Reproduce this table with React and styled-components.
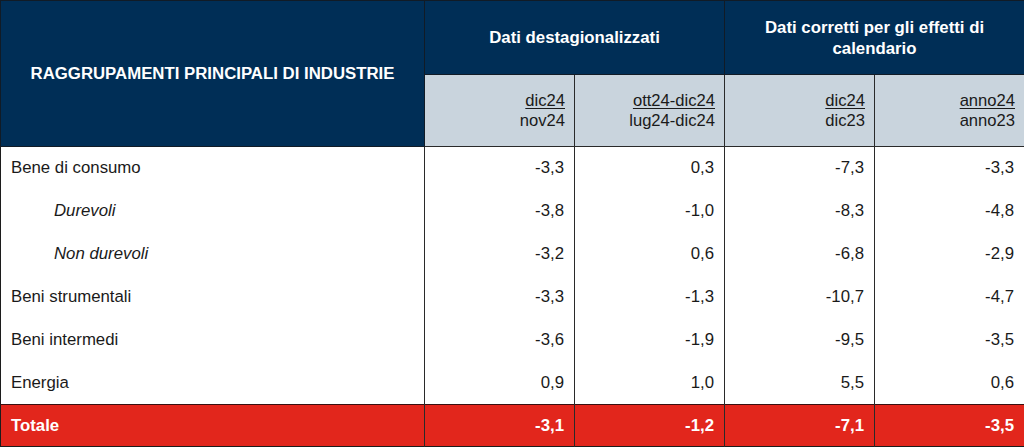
import React from "react";
import styled, { createGlobalStyle } from "styled-components";

const Global = createGlobalStyle`
  html, body { margin: 0; padding: 0; background: #ffffff; }
  body { font-family: "Liberation Sans", Arial, sans-serif; }
`;

const Table = styled.table`
  width: 1024px;
  border-collapse: collapse;
  table-layout: fixed;
  font-family: "Liberation Sans", Arial, sans-serif;
  color: #1a1a1a;
  border: 1px solid #1c1c1c;
`;

const HeadCell = styled.th`
  background: #002e56;
  color: #ffffff;
  font-weight: bold;
  font-size: 16.8px;
  line-height: 21px;
  text-align: center;
  vertical-align: middle;
  border: 1px solid #111b26;
  padding: 0 12px;
  height: ${(p) => p.$h || "auto"};
`;

const SubCell = styled.th`
  background: #c9d4dd;
  font-weight: normal;
  font-size: 16.6px;
  line-height: 20px;
  text-align: right;
  vertical-align: middle;
  padding: 0 9px 0 0;
  height: 71px;
  border: 1px solid #2a2a2a;
  color: #1a1a1a;
`;

const Under = styled.span`
  text-decoration: underline;
  text-underline-offset: 2px;
  text-decoration-thickness: 1px;
`;

const Row = styled.tr`
  height: ${(p) => (p.$total ? "42px" : "43px")};
  background: ${(p) => (p.$total ? "#e2261c" : "#ffffff")};
  color: ${(p) => (p.$total ? "#ffffff" : "#1a1a1a")};
  font-weight: ${(p) => (p.$total ? "bold" : "normal")};
  ${(p) => p.$total && "border-top: 1px solid #3a1010;"}
`;

const LabelCell = styled.td`
  font-size: 16.8px;
  font-style: ${(p) => (p.$sub ? "italic" : "normal")};
  padding: 0 0 0 ${(p) => (p.$sub ? "53px" : "10px")};
  border-right: 1px solid #2a2a2a;
  vertical-align: middle;
  white-space: nowrap;
`;

const NumCell = styled.td`
  font-size: 16.8px;
  text-align: right;
  padding: 0 10px 0 0;
  border-right: 1px solid #2a2a2a;
  vertical-align: middle;
`;

const rows = [
  { label: "Bene di consumo", v: ["-3,3", "0,3", "-7,3", "-3,3"] },
  { label: "Durevoli", sub: true, v: ["-3,8", "-1,0", "-8,3", "-4,8"] },
  { label: "Non durevoli", sub: true, v: ["-3,2", "0,6", "-6,8", "-2,9"] },
  { label: "Beni strumentali", v: ["-3,3", "-1,3", "-10,7", "-4,7"] },
  { label: "Beni intermedi", v: ["-3,6", "-1,9", "-9,5", "-3,5"] },
  { label: "Energia", v: ["0,9", "1,0", "5,5", "0,6"] },
];

const subs = [
  ["dic24", "nov24"],
  ["ott24-dic24", "lug24-dic24"],
  ["dic24", "dic23"],
  ["anno24", "anno23"],
];

export default function App() {
  return (
    <>
      <Global />
      <Table>
        <colgroup>
          <col style={{ width: 424 }} />
          <col style={{ width: 150 }} />
          <col style={{ width: 150 }} />
          <col style={{ width: 150 }} />
          <col style={{ width: 150 }} />
        </colgroup>
        <thead>
          <tr>
            <HeadCell rowSpan={2}>RAGGRUPAMENTI PRINCIPALI DI INDUSTRIE</HeadCell>
            <HeadCell colSpan={2} $h="73px">Dati destagionalizzati</HeadCell>
            <HeadCell colSpan={2} $h="73px">Dati corretti per gli effetti di calendario</HeadCell>
          </tr>
          <tr>
            {subs.map(([a, b], i) => (
              <SubCell key={i}>
                <Under>{a}</Under>
                <br />
                {b}
              </SubCell>
            ))}
          </tr>
        </thead>
        <tbody>
          {rows.map((r) => (
            <Row key={r.label}>
              <LabelCell $sub={r.sub}>{r.label}</LabelCell>
              {r.v.map((x, i) => (
                <NumCell key={i}>{x}</NumCell>
              ))}
            </Row>
          ))}
          <Row $total>
            <LabelCell>Totale</LabelCell>
            {["-3,1", "-1,2", "-7,1", "-3,5"].map((x, i) => (
              <NumCell key={i}>{x}</NumCell>
            ))}
          </Row>
        </tbody>
      </Table>
    </>
  );
}
